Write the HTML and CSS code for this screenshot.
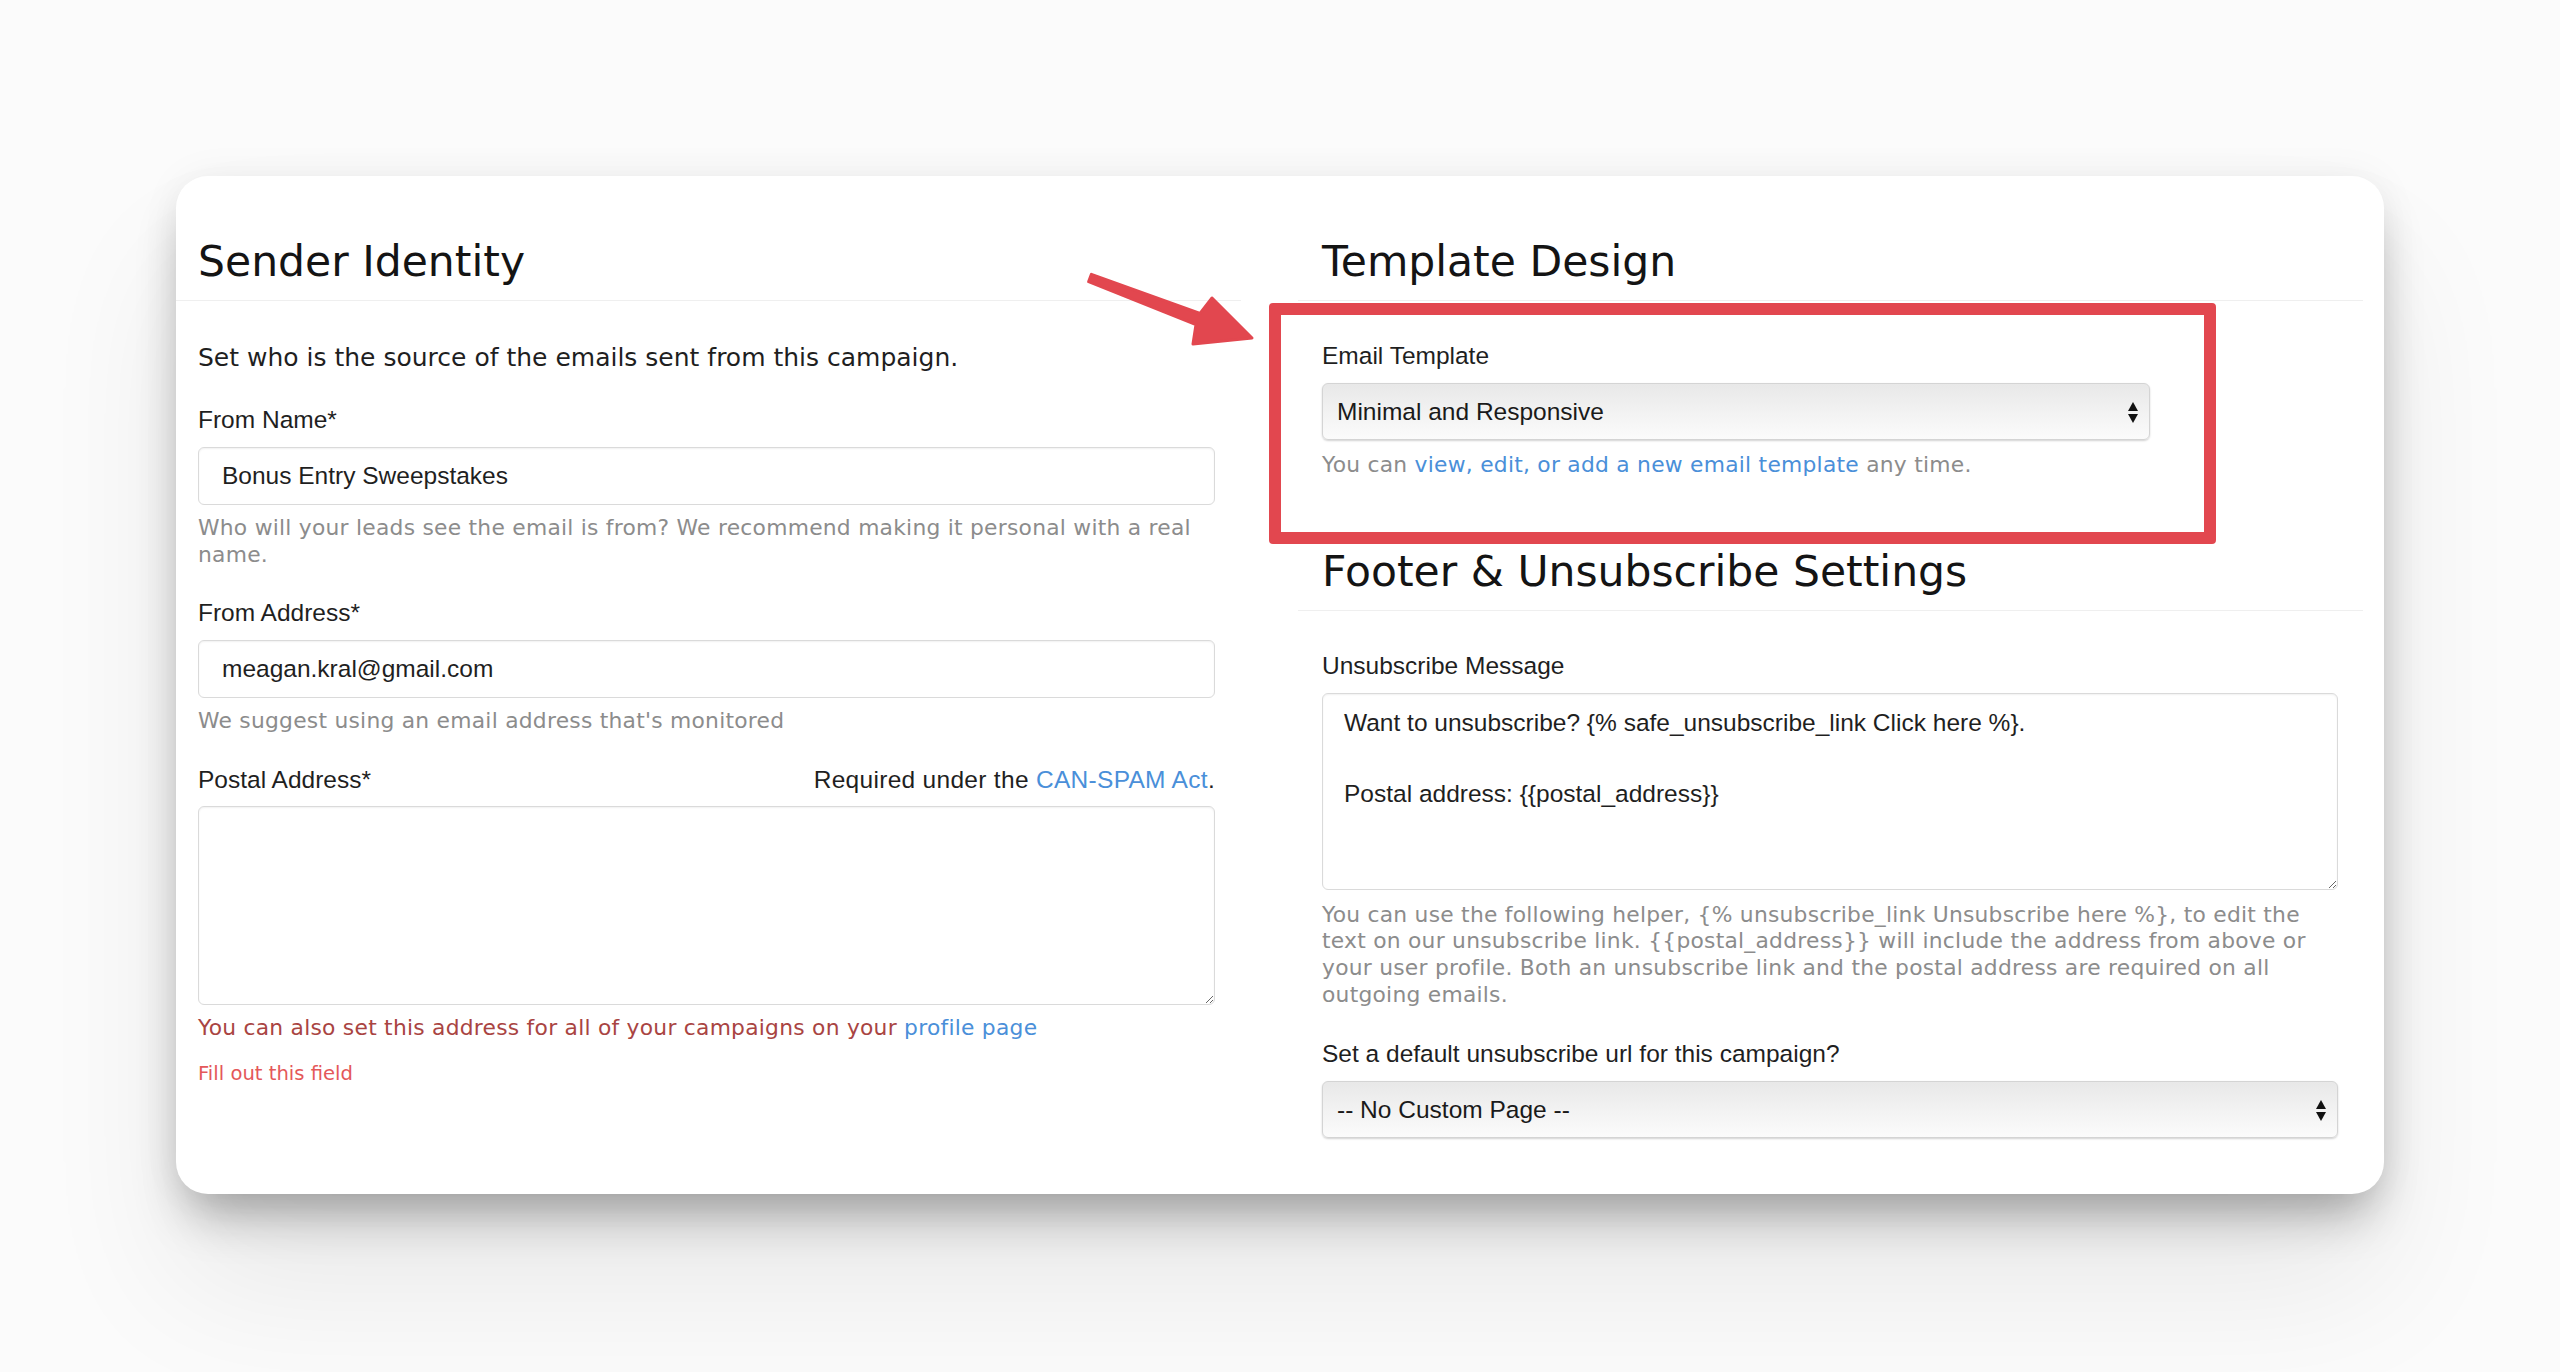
FILE: index.html
```html
<!DOCTYPE html>
<html lang="en">
<head>
<meta charset="utf-8">
<title>Campaign Settings</title>
<link rel="stylesheet" href="styles.css">
</head>
<body>
<div class="stage">
  <div class="card">
    <section class="col col-left">
      <h2 class="sec-title">Sender Identity</h2>
      <div class="sec-body">
        <p class="lead">Set who is the source of the emails sent from this campaign.</p>
        <div class="field">
          <label class="label" for="from-name">From Name*</label>
          <input class="input" id="from-name" type="text" value="Bonus Entry Sweepstakes">
          <p class="help">Who will your leads see the email is from? We recommend making it personal with a real name.</p>
        </div>
        <div class="field">
          <label class="label" for="from-address">From Address*</label>
          <input class="input" id="from-address" type="text" value="meagan.kral@gmail.com">
          <p class="help">We suggest using an email address that's monitored</p>
        </div>
        <div class="field">
          <div class="label-row">
            <label class="label" for="postal">Postal Address*</label>
            <span class="label-note">Required under the <a href="#">CAN-SPAM Act</a>.</span>
          </div>
          <textarea class="textarea textarea-postal" id="postal"></textarea>
          <p class="help help-error">You can also set this address for all of your campaigns on your <a href="#">profile page</a></p>
          <p class="field-error">Fill out this field</p>
        </div>
      </div>
    </section>

    <section class="col col-right">
      <h2 class="sec-title">Template Design</h2>
      <div class="sec-body">
        <div class="field field-first">
          <label class="label" for="template">Email Template</label>
          <div class="select select-narrow">
            <select id="template"><option>Minimal and Responsive</option></select>
          </div>
          <p class="help help-spaced">You can <a href="#">view, edit, or add a new email template</a> any time.</p>
        </div>
      </div>
      <div class="highlight"></div>

      <h2 class="sec-title sec-title-second">Footer &amp; Unsubscribe Settings</h2>
      <div class="sec-body">
        <div class="field field-first">
          <label class="label" for="unsub">Unsubscribe Message</label>
          <textarea class="textarea textarea-unsub" id="unsub">Want to unsubscribe? {% safe_unsubscribe_link Click here %}.

Postal address: {{postal_address}}</textarea>
          <p class="help help-spaced help-tall">You can use the following helper, {% unsubscribe_link Unsubscribe here %}, to edit the text on our unsubscribe link. {{postal_address}} will include the address from above or your user profile. Both an unsubscribe link and the postal address are required on all outgoing emails.</p>
        </div>
        <div class="field">
          <label class="label" for="unsub-url">Set a default unsubscribe url for this campaign?</label>
          <div class="select">
            <select id="unsub-url"><option>-- No Custom Page --</option></select>
          </div>
        </div>
      </div>
    </section>

    <svg class="arrow" width="190" height="95" viewBox="0 0 190 95" aria-hidden="true">
      <path d="M11.4 9.3 L120 48.4 L132 33 L172 73 L113 79 L116 59.6 L8.6 16.7 Z" fill="#e2474f" stroke="#e2474f" stroke-width="3" stroke-linejoin="round"/>
    </svg>
  </div>
</div>
</body>
</html>
```

FILE: styles.css
```css
* { box-sizing: border-box; }

html, body {
  margin: 0;
  padding: 0;
}

body {
  background: #fbfbfb;
  font-family: "DejaVu Sans", Verdana, sans-serif;
  color: #1c1c1c;
  width: 2560px;
  height: 1372px;
  overflow: hidden;
}

.stage {
  padding: 176px 176px 0 176px;
}

.card {
  position: relative;
  width: 2208px;
  background: #fff;
  border-radius: 32px;
  padding: 60px 21px 56px 0;
  display: grid;
  grid-template-columns: 1fr 1fr;
  column-gap: 57px;
  align-items: start;
  box-shadow:
    0 0 40px rgba(0, 0, 0, 0.05),
    0 30px 50px -12px rgba(0, 0, 0, 0.32),
    0 90px 140px rgba(0, 0, 0, 0.08);
}

.col {
  --pl: 22px;
  --pr: 26px;
  position: relative;
}

.col-right {
  --pl: 24px;
  --pr: 25px;
}

.sec-title {
  margin: 0;
  font-family: "DejaVu Sans", Verdana, sans-serif;
  font-weight: normal;
  font-size: 42.5px;
  line-height: 52px;
  color: #141414;
  padding: 0 var(--pr) 12px var(--pl);
  border-bottom: 1px solid #efefef;
}

.sec-title-second {
  margin-top: 67px;
}

.sec-body {
  padding: 0 var(--pr) 0 var(--pl);
}

.lead {
  margin: 40px 0 0;
  font-size: 25px;
  line-height: 34px;
  color: #1f1f1f;
}

.field {
  margin-top: 30px;
}

.field-first {
  margin-top: 40px;
}

.label {
  display: block;
  font-family: "Liberation Sans", Arial, sans-serif;
  font-size: 24.5px;
  line-height: 30px;
  color: #1f1f1f;
  margin-bottom: 12px;
}

.label-row {
  display: flex;
  justify-content: space-between;
  align-items: baseline;
  margin-bottom: 11px;
}

.label-row .label {
  margin-bottom: 0;
}

.label-note {
  font-family: "Liberation Sans", Arial, sans-serif;
  font-size: 24.5px;
  line-height: 30px;
  letter-spacing: 0.3px;
  color: #1f1f1f;
}

a {
  color: #4a8fd9;
  text-decoration: none;
}

.input {
  display: block;
  width: 100%;
  height: 58px;
  border: 1px solid #dadada;
  border-radius: 6px;
  padding: 0 23px;
  font-family: "Liberation Sans", Arial, sans-serif;
  font-size: 24.5px;
  color: #1f1f1f;
  background: #fff;
  box-shadow: inset 0 1px 2px rgba(0, 0, 0, 0.06);
  outline: none;
}

.textarea {
  display: block;
  width: 100%;
  border: 1px solid #dadada;
  border-radius: 6px;
  font-family: "Liberation Sans", Arial, sans-serif;
  font-size: 24.5px;
  color: #1f1f1f;
  background: #fff;
  box-shadow: inset 0 1px 2px rgba(0, 0, 0, 0.06);
  outline: none;
  resize: vertical;
}

.textarea-postal {
  height: 199px;
}

.textarea-unsub {
  height: 197px;
  padding: 11px 21px;
  line-height: 35.5px;
}

.help {
  margin: 10px 0 0;
  font-size: 21.8px;
  letter-spacing: 0.25px;
  line-height: 26.5px;
  color: #8c8c8c;
}

.help-spaced {
  margin-top: 12px;
}

.help-tall {
  line-height: 26.8px;
}

.help-error {
  color: #a94442;
}

.field-error {
  margin: 20px 0 0;
  font-size: 19.6px;
  line-height: 26px;
  color: #e4585a;
}

.select {
  position: relative;
  height: 57px;
}

.select-narrow {
  width: 828px;
}

.select select {
  appearance: none;
  -webkit-appearance: none;
  display: block;
  width: 100%;
  height: 100%;
  border: 1px solid #d4d4d4;
  border-radius: 6px;
  padding: 0 40px 0 14px;
  font-family: "Liberation Sans", Arial, sans-serif;
  font-size: 24.5px;
  color: #1a1a1a;
  background: linear-gradient(#e8e8e8, #f3f3f3 55%, #fbfbfb);
  box-shadow: 0 1px 2px rgba(0, 0, 0, 0.18);
  outline: none;
}

.select::before,
.select::after {
  content: "";
  position: absolute;
  right: 12px;
  width: 0;
  height: 0;
  border-left: 5px solid transparent;
  border-right: 5px solid transparent;
  pointer-events: none;
}

.select::before {
  top: 19px;
  border-bottom: 9px solid #111;
}

.select::after {
  top: 31px;
  border-top: 9px solid #111;
}

.highlight {
  position: absolute;
  left: -29px;
  top: 67px;
  width: 947px;
  height: 241px;
  border: 12px solid #e2474f;
  border-radius: 4px;
  pointer-events: none;
}

.arrow {
  position: absolute;
  left: 904px;
  top: 89px;
  pointer-events: none;
}
```
